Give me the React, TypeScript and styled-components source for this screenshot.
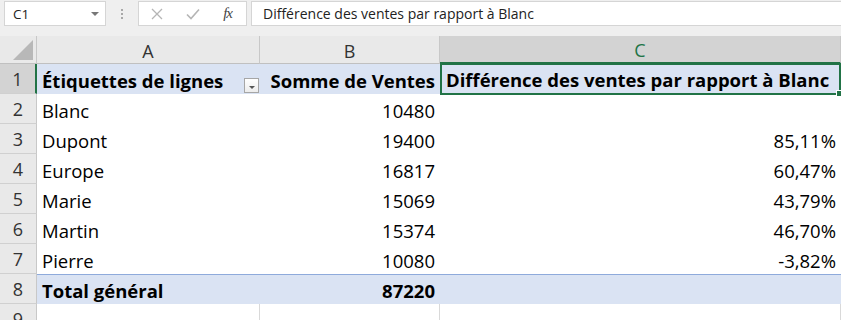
import React from "react";
import styled, { createGlobalStyle } from "styled-components";

const GlobalStyle = createGlobalStyle`
  html, body { margin: 0; padding: 0; background: #ffffff; }
  body { font-family: "Open Sans", Lato, sans-serif; overflow: hidden; }
  * { box-sizing: border-box; }
`;

const GREEN = "#217346";
const PIVOT_BG = "#dae3f3";

const Page = styled.div`
  width: 841px;
  height: 320px;
  display: flex;
  flex-direction: column;
  overflow: hidden;
`;

const Toolbar = styled.div`
  height: 36px;
  flex: none;
  background: #efefef;
  display: flex;
  align-items: flex-start;
  padding: 1px 0 0 4px;
`;

const Box = styled.div<{ $w?: number }>`
  height: 25px;
  background: #ffffff;
  border: 1px solid #d5d5d5;
  display: flex;
  align-items: center;
  ${(p) => (p.$w ? `width: ${p.$w}px; flex: none;` : "flex: 1;")}
`;

const NameBox = styled(Box)`
  justify-content: space-between;
  padding: 0 6px 0 8px;
  font-size: 13.5px;
  color: #222;
`;

const Caret = styled.span`
  width: 0;
  height: 0;
  border-left: 4px solid transparent;
  border-right: 4px solid transparent;
  border-top: 4px solid #777;
`;

const Grip = styled.div`
  width: 32px;
  height: 25px;
  flex: none;
  display: flex;
  flex-direction: column;
  align-items: center;
  justify-content: center;
  gap: 2px;
`;

const Dot = styled.span`
  width: 2px;
  height: 2px;
  background: #a8a8a8;
`;

const ButtonBox = styled(Box)`
  justify-content: space-between;
  padding: 0 14px 0 12px;
  margin-right: 4px;
`;

const Fx = styled.span`
  font-family: "Liberation Serif", serif;
  font-style: italic;
  font-size: 15px;
  color: #444;
  letter-spacing: -1px;
`;

const FormulaBox = styled(Box)`
  padding-left: 11px;
  font-size: 14px;
  color: #222;
  border-right: none;
`;

const Sheet = styled.div`
  display: grid;
  grid-template-columns: 37px 223px 180px 401px;
  grid-template-rows: 28px repeat(8, 30px) 30px;
`;

const Corner = styled.div`
  background: #e9e9e9;
  border-right: 1px solid #c8c8c8;
  border-bottom: 1px solid #c0c0c0;
  display: flex;
  align-items: flex-end;
  justify-content: flex-end;
  padding: 0 3px 3px 0;
`;

const Triangle = styled.span`
  width: 0;
  height: 0;
  border-left: 20px solid transparent;
  border-bottom: 20px solid #b8b8b8;
`;

const ColHead = styled.div<{ $sel?: boolean }>`
  background: ${(p) => (p.$sel ? "#d3d3d3" : "#e9e9e9")};
  border-right: 1px solid #c8c8c8;
  border-bottom: ${(p) => (p.$sel ? `2px solid ${GREEN}` : "1px solid #c0c0c0")};
  display: flex;
  align-items: center;
  justify-content: center;
  font-size: 18px;
  color: ${(p) => (p.$sel ? GREEN : "#333")};
  padding-top: 2px;
`;

const RowHead = styled.div<{ $sel?: boolean }>`
  background: ${(p) => (p.$sel ? "#d3d3d3" : "#e9e9e9")};
  border-right: ${(p) => (p.$sel ? `2px solid ${GREEN}` : "1px solid #c8c8c8")};
  border-bottom: 1px solid #d0d0d0;
  display: flex;
  align-items: center;
  justify-content: center;
  font-size: 18px;
  color: #333;
  padding-top: 1px;
`;

const Cell = styled.div<{
  $bg?: string;
  $bold?: boolean;
  $right?: boolean;
  $topLine?: boolean;
  $grid?: boolean;
}>`
  background: ${(p) => p.$bg || "#ffffff"};
  font-weight: ${(p) => (p.$bold ? 700 : 400)};
  font-size: 18.5px;
  color: #000;
  display: flex;
  align-items: center;
  justify-content: ${(p) => (p.$right ? "flex-end" : "space-between")};
  padding: 2px 5px 0 5px;
  white-space: nowrap;
  border-top: ${(p) => (p.$topLine ? "1px solid #8eaadb" : "none")};
  border-right: ${(p) => (p.$grid ? "1px solid #d9d9d9" : "none")};
  border-bottom: ${(p) => (p.$grid ? "1px solid #d9d9d9" : "none")};
`;

const SelectedCell = styled(Cell)`
  position: relative;
  border: 2px solid ${GREEN};
  padding: 1px 4px 0 4px;
  margin-top: -1px;
  margin-bottom: -1px;
  z-index: 1;
  &::after {
    content: "";
    position: absolute;
    right: -4px;
    bottom: -4px;
    width: 5px;
    height: 5px;
    background: ${GREEN};
    border: 1px solid #fff;
  }
`;

const FilterButton = styled.span`
  width: 15px;
  height: 15px;
  flex: none;
  align-self: flex-end;
  margin-bottom: 1px;
  margin-right: -4px;
  border: 1px solid #a6a6a6;
  background: linear-gradient(#ffffff, #ececec);
  display: flex;
  align-items: center;
  justify-content: center;
  padding-top: 3px;
`;

const FilterCaret = styled.span`
  width: 0;
  height: 0;
  border-left: 3px solid transparent;
  border-right: 3px solid transparent;
  border-top: 3px solid #555;
`;

const rows: [string, string, string][] = [
  ["Blanc", "10480", ""],
  ["Dupont", "19400", "85,11%"],
  ["Europe", "16817", "60,47%"],
  ["Marie", "15069", "43,79%"],
  ["Martin", "15374", "46,70%"],
  ["Pierre", "10080", "-3,82%"],
];

export default function App() {
  return (
    <Page>
      <GlobalStyle />
      <Toolbar>
        <NameBox $w={102}>
          <span>C1</span>
          <Caret />
        </NameBox>
        <Grip>
          <Dot />
          <Dot />
          <Dot />
        </Grip>
        <ButtonBox $w={109}>
          <svg width="12" height="12" viewBox="0 0 12 12">
            <path d="M1 1 L11 11 M11 1 L1 11" stroke="#b5b5b5" strokeWidth="1.3" fill="none" />
          </svg>
          <svg width="14" height="12" viewBox="0 0 14 12">
            <path d="M1 6.5 L5 10.5 L13 1.5" stroke="#b5b5b5" strokeWidth="1.6" fill="none" />
          </svg>
          <Fx>fx</Fx>
        </ButtonBox>
        <FormulaBox>Différence des ventes par rapport à Blanc</FormulaBox>
      </Toolbar>
      <Sheet>
        <Corner>
          <Triangle />
        </Corner>
        <ColHead>A</ColHead>
        <ColHead>B</ColHead>
        <ColHead $sel>C</ColHead>

        <RowHead $sel>1</RowHead>
        <Cell $bg={PIVOT_BG} $bold>
          <span>Étiquettes de lignes</span>
          <FilterButton>
            <FilterCaret />
          </FilterButton>
        </Cell>
        <Cell $bg={PIVOT_BG} $bold $right>
          Somme de Ventes
        </Cell>
        <SelectedCell $bg={PIVOT_BG} $bold>
          <span>Différence des ventes par rapport à Blanc</span>
        </SelectedCell>

        {rows.map((r, i) => (
          <React.Fragment key={r[0]}>
            <RowHead>{i + 2}</RowHead>
            <Cell>{r[0]}</Cell>
            <Cell $right>{r[1]}</Cell>
            <Cell $right>{r[2]}</Cell>
          </React.Fragment>
        ))}

        <RowHead>8</RowHead>
        <Cell $bg={PIVOT_BG} $bold $topLine>
          Total général
        </Cell>
        <Cell $bg={PIVOT_BG} $bold $right $topLine>
          87220
        </Cell>
        <Cell $bg={PIVOT_BG} $topLine />

        <RowHead>9</RowHead>
        <Cell $grid />
        <Cell $grid />
        <Cell $grid />
      </Sheet>
    </Page>
  );
}
